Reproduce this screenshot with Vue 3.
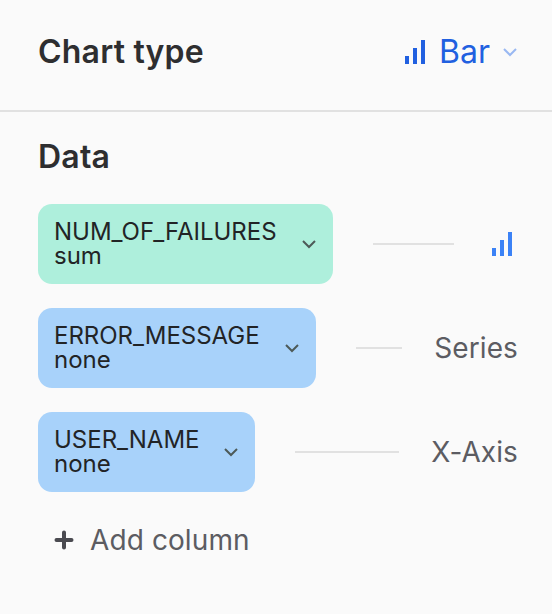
<script setup>
const rows = [
  { name: 'NUM_OF_FAILURES', agg: 'sum', tone: 'green', label: '' },
  { name: 'ERROR_MESSAGE', agg: 'none', tone: 'blue', label: 'Series' },
  { name: 'USER_NAME', agg: 'none', tone: 'blue', label: 'X-Axis' },
]
</script>

<template>
  <div class="panel">
    <header class="head">
      <h2 class="title">Chart type</h2>
      <div class="type">
        <svg class="bars dark" width="32" height="32" viewBox="0 0 32 32"><rect x="6" y="20" width="4" height="8" /><rect x="14" y="12" width="4" height="16" /><rect x="22" y="4" width="4" height="24" /></svg>
        <span class="type-name">Bar</span>
        <svg class="type-chev" width="16" height="10" viewBox="0 0 16 10"><path d="M2 2 L8 8 L14 2" /></svg>
      </div>
    </header>
    <section class="data">
      <h3 class="sub">Data</h3>
      <div class="rows">
        <div v-for="r in rows" :key="r.name" class="row">
          <div class="chip" :class="r.tone">
            <div class="chip-text">
              <div class="name">{{ r.name }}</div>
              <div class="agg">{{ r.agg }}</div>
            </div>
            <svg class="chev" width="16" height="10" viewBox="0 0 16 10"><path d="M2 2 L8 8 L14 2" /></svg>
          </div>
          <div class="line"></div>
          <svg v-if="!r.label" class="bars light" width="32" height="32" viewBox="0 0 32 32"><rect x="6" y="20" width="4" height="8" /><rect x="14" y="12" width="4" height="16" /><rect x="22" y="4" width="4" height="24" /></svg>
          <span v-else class="label">{{ r.label }}</span>
        </div>
      </div>
      <div class="add">
        <svg width="20" height="20" viewBox="0 0 20 20"><path d="M10 2.5 V17.5 M2.5 10 H17.5" /></svg>
        <span>Add column</span>
      </div>
    </section>
  </div>
</template>

<style scoped>
.panel {
  width: 552px;
  height: 614px;
  background: #fafafa;
  font-family: Inter, "Liberation Sans", sans-serif;
  color: #2e2e30;
  overflow: hidden;
}
.head {
  display: flex;
  align-items: center;
  justify-content: space-between;
  padding: 0 34px 6px 38px;
  box-sizing: border-box;
  height: 112px;
  border-bottom: 2px solid #e1e1e1;
}
.title {
  margin: 0;
  font-size: 32px;
  line-height: 36px;
  font-weight: 600;
  letter-spacing: 0.2px;
  white-space: nowrap;
}
.type {
  display: flex;
  align-items: center;
  color: #2160e0;
}
.type-name {
  font-size: 32px;
  line-height: 36px;
  margin-left: 8px;
}
.type-chev {
  margin-left: 12px;
  fill: none;
  stroke: #99b8f2;
  stroke-width: 2;
}
.bars.dark { fill: #2160e0; }
.bars.light { fill: #3b82f6; }
.data {
  padding: 27px 34px 0 38px;
}
.sub {
  margin: 0;
  font-size: 32px;
  line-height: 36px;
  font-weight: 600;
  letter-spacing: 0.2px;
}
.rows {
  margin-top: 29px;
  display: flex;
  flex-direction: column;
  gap: 24px;
}
.row {
  display: flex;
  align-items: center;
  height: 80px;
}
.chip {
  height: 80px;
  box-sizing: border-box;
  border-radius: 14px;
  padding: 0 16px;
  display: flex;
  align-items: center;
  gap: 24px;
  color: #222426;
}
.chip.green { background: #aeefdc; }
.chip.blue { background: #a8d2fa; }
.name {
  font-size: 24px;
  line-height: 24px;
  font-weight: 400;
  letter-spacing: -0.0175px;
  white-space: nowrap;
}
.agg {
  font-size: 24px;
  line-height: 24px;
  white-space: nowrap;
}
.chev {
  fill: none;
  stroke: #4d5a58;
  stroke-width: 2;
}
.line {
  flex: 1;
  height: 2px;
  background: #e1e1e1;
  margin: 0 32px 0 40px;
}
.label {
  font-size: 28px;
  line-height: 32px;
  letter-spacing: 0.1px;
  color: #5c5c62;
}
.add {
  margin-top: 24px;
  margin-left: 16px;
  display: flex;
  align-items: center;
  gap: 16px;
  font-size: 28px;
  line-height: 48px;
  letter-spacing: 0.1px;
  color: #5c5c62;
}
.add svg {
  fill: none;
  stroke: #4a4a50;
  stroke-width: 4;
  stroke-linecap: round;
}
</style>
